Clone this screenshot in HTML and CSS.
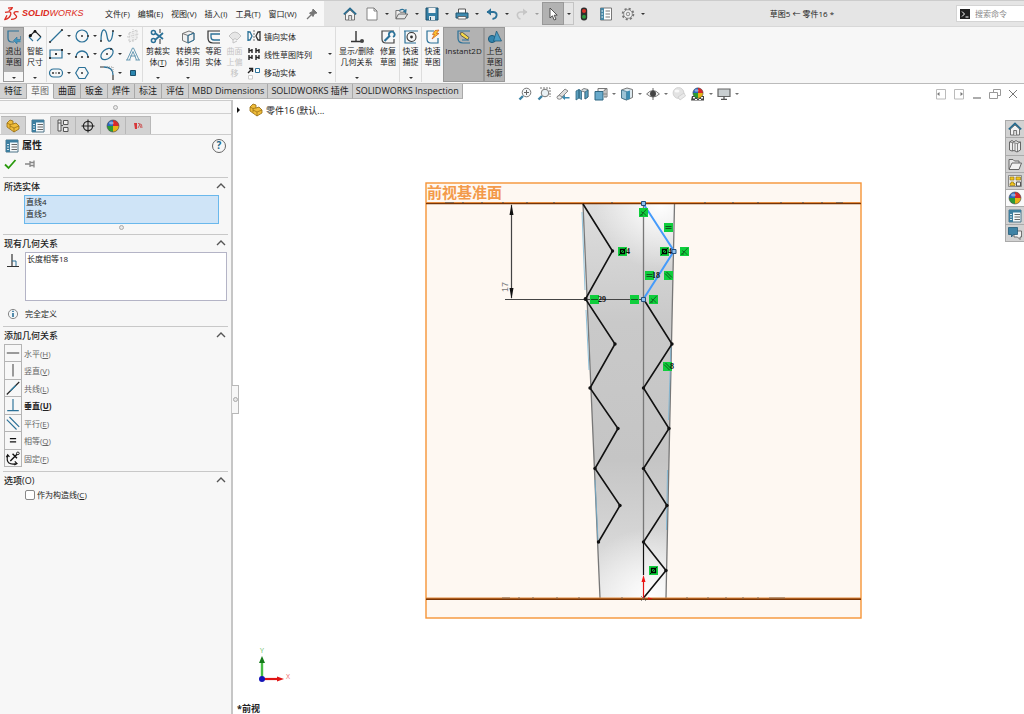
FILE: index.html
```
<!DOCTYPE html>
<html lang="zh">
<head>
    <meta charset="UTF-8">
    <meta name="viewport" content="width=device-width, initial-scale=1.0">
    <title>SOLIDWORKS</title>
    <link rel="stylesheet" href="styles.css">
</head>
<body>
    <!-- Shared icons -->
    <svg class="sprite" aria-hidden="true">
        <defs>
            <symbol id="i-ball" viewBox="0 0 14 14">
                <path d="M7 7V1A6 6 0 0 1 13 7Z" fill="#d8282c"/>
                <path d="M7 7H13A6 6 0 0 1 7 13Z" fill="#e7b417"/>
                <path d="M7 7V13A6 6 0 0 1 1 7Z" fill="#2c9b35"/>
                <path d="M7 7H1A6 6 0 0 1 7 1Z" fill="#2766c2"/>
                <circle cx="7" cy="7" r="6" fill="none" stroke="#444" stroke-width=".6"/>
                <ellipse cx="5.4" cy="4" rx="2.4" ry="1.5" fill="#fff" opacity=".45"/>
            </symbol>
            <symbol id="i-list" viewBox="0 0 14 14">
                <path d="M1 1H13V13H1Z" fill="#f4f8fa" stroke="#4f7488"/>
                <path d="M1 1H13V3.5H1ZM1 1H5V13H1Z" fill="#3d7e9f"/>
                <path d="M2.2 5.5h1.6M2.2 8h1.6M2.2 10.5h1.6" stroke="#fff" stroke-width="1.2"/>
                <path d="M6.5 5.5H12M6.5 8H12M6.5 10.5H12" stroke="#666"/>
            </symbol>
            <symbol id="i-home" viewBox="0 0 14 14">
                <path d="M2.5 7V13H11.5V7L7 3Z" fill="#f3f3f3" stroke="#555" stroke-width=".8"/>
                <path d="M5.7 13V8.5H8.6V13" fill="#ddd" stroke="#555" stroke-width=".8"/>
                <path d="M.8 7.4L7 1.4L13.2 7.4" fill="none" stroke="#23688c" stroke-width="1.6"/>
            </symbol>
            <symbol id="i-part" viewBox="0 0 14 14">
                <path d="M1 4L4 1L7 2V5L10 4L13 7V10L8 13L1 8Z" fill="#f0bd3b" stroke="#94690f" stroke-width=".8"/>
                <path d="M1 4L4 5.5V9.5M4 5.5L7 5M8 13V9L13 7M8 9L4 7" fill="none" stroke="#94690f" stroke-width=".7"/>
            </symbol>
            <symbol id="i-chevron" viewBox="0 0 10 6">
                <path d="M1 5L5 1L9 5" fill="none" stroke="#555" stroke-width="1.4"/>
            </symbol>
            <symbol id="b-coin" viewBox="0 0 9 9">
                <path d="M0 0H9V9H0Z" fill="#0fce3c"/>
                <path d="M1.5 7.8L7.5 1.2M4.2 4.6L7.3 7.8M2.2 3.6L4.2 5M1.2 7H4" fill="none" stroke="#12511f" stroke-width=".8"/>
            </symbol>
            <symbol id="b-equal" viewBox="0 0 9 9">
                <path d="M0 0H9V9H0Z" fill="#0fce3c"/>
                <path d="M1.5 3.5H7.5M1.5 5.5H7.5" stroke="#12511f"/>
            </symbol>
            <symbol id="b-horiz" viewBox="0 0 9 9">
                <path d="M0 0H9V9H0Z" fill="#0fce3c"/>
                <path d="M1 4.5H8" stroke="#12511f"/>
            </symbol>
            <symbol id="b-para" viewBox="0 0 9 9">
                <path d="M0 0H9V9H0Z" fill="#0fce3c"/>
                <path d="M1 2.5L6.5 8M2.5 1L8 6.5" stroke="#12511f"/>
            </symbol>
            <symbol id="b-mid" viewBox="0 0 9 9">
                <path d="M0 0H9V9H0Z" fill="#0fce3c"/>
                <path d="M2.5 2.5H6.5V6.5H2.5Z" fill="none" stroke="#000" stroke-width="1.3"/>
                <path d="M1 8L8 1" stroke="#000" stroke-width=".8"/>
            </symbol>
        </defs>
    </svg>

    <header class="titlebar">
        <div class="brand-area">
            <svg class="logo-mark" viewBox="0 0 16 16">
                <g fill="none" stroke="#dc2a20" stroke-width="1.3" stroke-linejoin="round">
                    <path d="M4 2.2L8.4 1.6Q8 3.4 4.8 4.6"/>
                    <path d="M1 6.4Q7.5 4.6 6.8 8.2Q5.6 12.4 .8 13.6L3 9.2"/>
                    <path d="M14.6 5.8Q9.8 5.2 10 7.4L12.6 10.4Q12.8 13.2 7 13.4"/>
                </g>
            </svg>
            <div class="logo"><b>SOLID</b>WORKS</div>
            <nav class="menu">
                <a href="#">文件(F)</a>
                <a href="#">编辑(E)</a>
                <a href="#">视图(V)</a>
                <a href="#">插入(I)</a>
                <a href="#">工具(T)</a>
                <a href="#">窗口(W)</a>
            </nav>
            <button class="icon-btn" aria-label="固定">
                <svg viewBox="0 0 14 14"><path d="M8 2L12 6L9.5 6.5L8 9.5L4.5 6L7.5 4.5Z" fill="#777" stroke="#777"/><path d="M6 8L2 12" stroke="#777" stroke-width="1.2"/></svg>
            </button>
        </div>
        <div class="quick">
            <button class="icon-btn" aria-label="主页"><svg viewBox="0 0 14 14"><use href="#i-home"/></svg></button>
            <button class="icon-btn spaced" aria-label="新建">
                <svg viewBox="0 0 14 14"><path d="M2 1H9L12 4V13H2Z" fill="#fff" stroke="#777" stroke-width=".9"/><path d="M9 1V4H12" fill="none" stroke="#777" stroke-width=".9"/></svg>
            </button>
            <button class="drop" aria-label="更多"></button>
            <button class="icon-btn" aria-label="打开">
                <svg viewBox="0 0 16 14"><path d="M1 12V3H5L6 5H12V7" fill="#eee" stroke="#666"/><path d="M1 12.5L4 7H14.5L11 12.5Z" fill="#e4e4e4" stroke="#555"/><path d="M5 3Q10 0 12 4.5M12.6 1.5L12.2 5L9.4 3.6" fill="none" stroke="#2a7196" stroke-width="1.4"/></svg>
            </button>
            <button class="drop" aria-label="更多"></button>
            <button class="icon-btn" aria-label="保存">
                <svg viewBox="0 0 14 14"><path d="M1 1H13V13H1Z" fill="#347fa5" stroke="#1d516d"/><path d="M3.5 1H10.5V6H3.5Z" fill="#f4f4f4"/><path d="M4 9H10V13H4Z" fill="#dfe8ec"/><path d="M5.5 10V13" stroke="#1d516d"/></svg>
            </button>
            <button class="drop" aria-label="更多"></button>
            <button class="icon-btn" aria-label="打印">
                <svg viewBox="0 0 14 14"><path d="M3.5 6V2H10.5V6" fill="#fff" stroke="#555"/><path d="M1 6H13V11H1Z" fill="#3f8bb0" stroke="#225770"/><path d="M3 9.5H11V12H3Z" fill="#fff" stroke="#555" stroke-width=".8"/></svg>
            </button>
            <button class="drop" aria-label="更多"></button>
            <button class="icon-btn" aria-label="撤消">
                <svg viewBox="0 0 14 14"><path d="M2 5H8.5Q12 5.5 11.6 8.5Q11.2 11.5 7.5 12" fill="none" stroke="#2b7198" stroke-width="1.8"/><path d="M6 1.2L1.6 5L6 8.6Z" fill="#2b7198"/></svg>
            </button>
            <button class="drop" aria-label="更多"></button>
            <button class="icon-btn" aria-label="重做" disabled>
                <svg viewBox="0 0 14 14"><path d="M12 5H5.5Q2 5.5 2.4 8.5Q2.8 11.5 5.5 12" fill="none" stroke="#c6c6c6" stroke-width="1.6"/><path d="M8 1.6L12.4 5L8 8.4Z" fill="#c6c6c6"/></svg>
            </button>
            <button class="drop" aria-label="更多"></button>
            <button class="select-btn" aria-label="选择">
                <svg viewBox="0 0 14 14"><path d="M4 1V11L6.4 8.8L8.2 13L10 12.2L8.2 8.2H11.2Z" fill="#fff" stroke="#444" stroke-width=".9"/></svg>
            </button>
            <button class="drop select-drop" aria-label="更多"></button>
            <button class="icon-btn" aria-label="重建模型">
                <svg viewBox="0 0 14 14"><rect x="3.8" y=".5" width="6.4" height="13" rx="3" fill="#2e2e2e"/><circle cx="7" cy="4" r="2" fill="#dd3328"/><circle cx="7" cy="9.8" r="2" fill="#2f9a3e"/></svg>
            </button>
            <button class="icon-btn spaced" aria-label="文件属性">
                <svg viewBox="0 0 14 14"><path d="M1.5 1H12.5V13H1.5Z" fill="#fff" stroke="#777"/><path d="M1.5 1H5V13H1.5Z" fill="#4687a6"/><path d="M6.5 4H11M6.5 7H11M6.5 10H11" stroke="#777"/><path d="M2.5 4h1.5M2.5 7h1.5M2.5 10h1.5" stroke="#fff"/></svg>
            </button>
            <button class="icon-btn spaced" aria-label="选项">
                <svg viewBox="0 0 14 14"><circle cx="7" cy="7" r="5.3" fill="none" stroke="#777" stroke-width="2" stroke-dasharray="2.1 2.06"/><circle cx="7" cy="7" r="4.3" fill="#f4f4f4" stroke="#777" stroke-width=".8"/><circle cx="7" cy="7" r="1.8" fill="#e5e5e5" stroke="#777" stroke-width=".8"/></svg>
            </button>
            <button class="drop" aria-label="更多"></button>
        </div>
        <div class="doc-title">草图5 ← 零件16 *</div>
        <label class="search">
            <svg viewBox="0 0 10 10"><path d="M0 0H10V10H0Z" fill="#222"/><path d="M2 2.5L4.5 5L2 7.5M5.5 8H8.5" fill="none" stroke="#fff"/></svg>
            <input type="text" placeholder="搜索命令" aria-label="搜索命令">
        </label>
    </header>

    <div class="ribbon">
        <button class="tool exit active">
            <svg viewBox="0 0 16 16"><path d="M13 2H2V9Q2 13 6 13H8" fill="none" stroke="#2b7198" stroke-width="1.2"/><path d="M14.5 7V10.5H11V8L7.5 11.5L11 15V12.8H14.5" fill="#4295bd" stroke="#2b7198" stroke-width=".6"/></svg>
            <span>退出草图</span><i class="caret"></i>
        </button>
        <button class="tool dim">
            <svg viewBox="0 0 16 16"><path d="M2 8L8 2L14 8" fill="none" stroke="#222" stroke-width="1.1"/><path d="M2 8L6 12M14 8L10 12" stroke="#2b7198" stroke-width="1.1"/><circle cx="3.4" cy="6.6" r="1.6" fill="#111"/><circle cx="8" cy="2.4" r="1.4" fill="#111"/></svg>
            <span>智能尺寸</span><i class="caret"></i>
        </button>
        <div class="sketch-grid">
            <button class="icon-btn" aria-label="直线"><svg viewBox="0 0 16 16"><path d="M2 14L14 2" stroke="#2b7198" stroke-width="1.2"/><circle cx="2" cy="14" r="1.1" fill="#333"/><circle cx="14" cy="2" r="1.1" fill="#333"/></svg></button>
            <button class="drop" aria-label="更多"></button>
            <button class="icon-btn" aria-label="圆"><svg viewBox="0 0 16 16"><circle cx="8" cy="8" r="6" fill="none" stroke="#2b7198" stroke-width="1.2"/><circle cx="8" cy="8" r="1" fill="#333"/><circle cx="14" cy="8" r="1" fill="#333"/></svg></button>
            <button class="drop" aria-label="更多"></button>
            <button class="icon-btn" aria-label="样条曲线"><svg viewBox="0 0 16 16"><path d="M2 13C2 -2 7 0 8 8S13 15 14 3" fill="none" stroke="#2b7198" stroke-width="1.3"/><circle cx="2" cy="13" r="1" fill="#333"/><circle cx="14" cy="3" r="1" fill="#333"/></svg></button>
            <button class="drop" aria-label="更多"></button>
            <button class="icon-btn" aria-label="基准面" disabled><svg viewBox="0 0 16 16"><path d="M4 5L12 2V11L4 14Z" fill="#eee" stroke="#c8c8c8" stroke-dasharray="2 1"/><path d="M8 1V15M2 9L14 6" stroke="#ccc" stroke-dasharray="1 1"/></svg></button>

            <button class="icon-btn" aria-label="矩形"><svg viewBox="0 0 16 16"><path d="M2 4H14V12H2Z" fill="none" stroke="#2b7198" stroke-width="1.2"/><path d="M7 7h2v2H7ZM13 3h2v2h-2ZM1 11h2v2H1Z" fill="#333"/></svg></button>
            <button class="drop" aria-label="更多"></button>
            <button class="icon-btn" aria-label="圆弧"><svg viewBox="0 0 16 16"><path d="M2 11A6 6 0 0 1 14 11" fill="none" stroke="#2b7198" stroke-width="1.3"/><circle cx="2" cy="11" r="1.1" fill="#333"/><circle cx="14" cy="11" r="1.1" fill="#333"/><circle cx="8" cy="11" r="1.1" fill="#333"/></svg></button>
            <button class="drop" aria-label="更多"></button>
            <button class="icon-btn" aria-label="椭圆"><svg viewBox="0 0 16 16"><ellipse cx="8" cy="8" rx="7" ry="4.6" transform="rotate(-40 8 8)" fill="none" stroke="#2b7198" stroke-width="1.2"/><circle cx="8" cy="8" r="1" fill="#333"/><circle cx="12" cy="3" r="1" fill="#333"/></svg></button>
            <button class="drop" aria-label="更多"></button>
            <button class="icon-btn" aria-label="文字"><svg viewBox="0 0 16 16"><path d="M2 14L7.5 2H8.5L14 14M4.5 14L8 5.5L11.5 14M5 10H11M1 14H5.5M10.5 14H15" fill="none" stroke="#6a9bb4"/></svg></button>

            <button class="icon-btn" aria-label="槽口"><svg viewBox="0 0 16 16"><rect x="1.5" y="4" width="13" height="8" rx="4" fill="none" stroke="#2b7198" stroke-width="1.2"/><path d="M4 8h2M7.5 8h1M10 8h2" stroke="#333" stroke-width="1.4"/></svg></button>
            <button class="drop" aria-label="更多"></button>
            <button class="icon-btn" aria-label="多边形"><svg viewBox="0 0 16 16"><path d="M5 2.5H11L14.3 8L11 13.5H5L1.7 8Z" fill="none" stroke="#2b7198" stroke-width="1.2"/><circle cx="8" cy="8" r="1" fill="#333"/></svg></button>
            <span></span>
            <button class="icon-btn" aria-label="圆角"><svg viewBox="0 0 16 16"><path d="M5 2Q14 2 14 10" fill="none" stroke="#2b7198" stroke-width="1.3"/><path d="M1 2H5M14 10V15" stroke="#333" stroke-width="1.2"/><path d="M8 2H14V8" fill="none" stroke="#999" stroke-dasharray="1 1"/></svg></button>
            <button class="drop" aria-label="更多"></button>
            <button class="icon-btn" aria-label="点"><svg viewBox="0 0 16 16"><path d="M5.5 5.5H10.5V10.5H5.5Z" fill="#2b86b0" stroke="#1d516d"/></svg></button>
        </div>
        <button class="tool wide">
            <svg viewBox="0 0 16 16"><path d="M5 4L13 10M5 11L13 4" stroke="#2b7198" stroke-width="1.8"/><circle cx="3.4" cy="3.4" r="2" fill="none" stroke="#2b7198" stroke-width="1.5"/><circle cx="3.4" cy="11.6" r="2" fill="none" stroke="#2b7198" stroke-width="1.5"/><path d="M10 0V4M10 10V15" stroke="#333"/></svg>
            <span>剪裁实体(<u>T</u>)</span><i class="caret"></i>
        </button>
        <button class="tool wide">
            <svg viewBox="0 0 16 16"><path d="M2.5 4.5L9 2L14 4V11L8 14L2.5 11.5Z" fill="#f1f1f1" stroke="#777"/><path d="M2.5 4.5L8 6.5V14M8 6.5L14 4" fill="none" stroke="#777"/><path d="M8 6.5L14 4V11L8 14Z" fill="none" stroke="#2b7198"/></svg>
            <span>转换实体引用</span><i class="caret"></i>
        </button>
        <button class="tool">
            <svg viewBox="0 0 16 16"><path d="M14 2H2V9Q2 14 7 14H14" fill="none" stroke="#333" stroke-width="1.2"/><path d="M14 5H5V8Q5 11 8 11H14" fill="none" stroke="#2b7198" stroke-width="1.3"/></svg>
            <span>等距实体</span>
        </button>
        <button class="tool" disabled>
            <svg viewBox="0 0 16 16"><path d="M2 7Q8 -1 14 7L10 11Q8 8 6 11Z" fill="#e6e6e6" stroke="#c4c4c4"/><path d="M6 11V14L10 12" fill="none" stroke="#c4c4c4"/></svg>
            <span>曲面上偏移</span>
        </button>
        <div class="tool-list">
            <button>
                <svg viewBox="0 0 16 14"><path d="M2 2V12M2 11H4L6 7L4 3H2" fill="none" stroke="#2b7198" stroke-width="1.3"/><path d="M14 2V12M14 11H12L10 7L12 3H14" fill="none" stroke="#333" stroke-width="1.3"/><path d="M8 1V13" stroke="#777" stroke-dasharray="2 1"/></svg>
                镜向实体
            </button>
            <button>
                <svg viewBox="0 0 16 14"><path d="M3 1V6M3 3.5H6M6 2V6M3 8V13M3 10.5H6M6 8V12M10 1V6M10 3.5H13M13 2V6M10 8V13M10 10.5H13M13 8V12" fill="none" stroke="#222" stroke-width="1.4"/></svg>
                线性草图阵列<i class="caret"></i>
            </button>
            <button>
                <svg viewBox="0 0 16 14"><path d="M2 7L6 3M3 2.5H6.5V6" fill="none" stroke="#222" stroke-width="1.4"/><path d="M9.5 2.5H13.5V6.5H9.5Z" fill="#fff" stroke="#2b7198"/><path d="M2.5 9.5H6.5V13H2.5Z" fill="#fff" stroke="#ccc"/></svg>
                移动实体<i class="caret"></i>
            </button>
        </div>
        <button class="tool relations">
            <svg viewBox="0 0 16 16"><path d="M7 2V12M2 12.5H12" stroke="#333" stroke-width="1.4"/><circle cx="13" cy="12" r="2" fill="#444"/></svg>
            <span>显示/删除几何关系</span><i class="caret"></i>
        </button>
        <button class="tool repair">
            <svg viewBox="0 0 16 16"><path d="M14 2H2V10Q2 14 6 14H14V10" fill="none" stroke="#444" stroke-width="1.2"/><path d="M4.5 12L10 6.5" stroke="#2b7198" stroke-width="2.2"/><path d="M9.2 6.6A2.8 2.8 0 1 1 13 8" fill="none" stroke="#2b7198" stroke-width="1.8"/></svg>
            <span>修复草图</span>
        </button>
        <button class="tool edge">
            <svg viewBox="0 0 16 16"><path d="M1 2H15M2 2V14H13" fill="none" stroke="#2b7198" stroke-width="1.2"/><circle cx="8.5" cy="8" r="4.5" fill="none" stroke="#333" stroke-width="1.1"/><circle cx="8.5" cy="8" r="1.4" fill="#333"/></svg>
            <span>快速捕捉</span><i class="caret"></i>
        </button>
        <button class="tool edge">
            <svg viewBox="0 0 16 16"><path d="M9 2H2V10Q2 14 6 14H13V9" fill="none" stroke="#2b7198" stroke-width="1.2"/><path d="M10 1.5L14 1L11.5 4.5H14L7 10L9.5 5.5H7.5Z" fill="#fbc02d" stroke="#c8571b" stroke-width=".7"/></svg>
            <span>快速草图</span>
        </button>
        <button class="tool instant active">
            <svg viewBox="0 0 16 16"><path d="M14 2H2V9Q2 14 7 14H14" fill="none" stroke="#2b7198" stroke-width="1.2"/><path d="M4 4L6.5 3.5L13 8.5L11.5 10.8L5 6.5Z" fill="#f4d848" stroke="#444" stroke-width=".8"/><path d="M6 11H13" stroke="#2b7198"/></svg>
            <span>Instant2D</span>
        </button>
        <button class="tool active">
            <svg viewBox="0 0 16 16"><circle cx="5" cy="10" r="3.6" fill="#3484ac" stroke="#1f5c7c"/><path d="M9.5 2L14.5 12H6.5Z" fill="#4b9cc4" stroke="#1f5c7c" stroke-width=".8"/></svg>
            <span>上色草图轮廓</span>
        </button>
    </div>

    <div class="doc-bar">
        <nav class="tabs">
            <a href="#">特征</a>
            <a href="#" class="current">草图</a>
            <a href="#">曲面</a>
            <a href="#">钣金</a>
            <a href="#">焊件</a>
            <a href="#">标注</a>
            <a href="#">评估</a>
            <a href="#" class="addin">MBD Dimensions</a>
            <a href="#" class="addin">SOLIDWORKS 插件</a>
            <a href="#" class="addin">SOLIDWORKS Inspection</a>
        </nav>
        <div class="hud">
            <button class="icon-btn" aria-label="整屏显示全图"><svg viewBox="0 0 14 14"><circle cx="8.5" cy="5.5" r="4.3" fill="#f5f8fa" stroke="#777"/><path d="M8.5 3V8M6 5.5H11" stroke="#666"/><path d="M5 9L1.5 12.5" stroke="#3a82a5" stroke-width="2.4"/></svg></button>
            <button class="icon-btn" aria-label="局部放大"><svg viewBox="0 0 14 14"><path d="M3 1H13V10" fill="none" stroke="#777" stroke-dasharray="2 1"/><circle cx="8" cy="6" r="3.8" fill="#e9f1f5" stroke="#777"/><path d="M5 9L1.5 12.5" stroke="#3a82a5" stroke-width="2.4"/></svg></button>
            <button class="icon-btn" aria-label="上一视图"><svg viewBox="0 0 14 14"><path d="M1 10L9 2L12 4L5 11Z" fill="#ddd" stroke="#888"/><ellipse cx="3.4" cy="10.4" rx="2.4" ry="1.8" fill="#eee" stroke="#888"/><path d="M13.5 10H9V7.8L5.8 10.5L9 13V11.5H13.5Z" fill="#3a88ae"/></svg></button>
            <button class="icon-btn" aria-label="剖面视图"><svg viewBox="0 0 14 14"><path d="M1 4L4 2.5V11L1 13Z M4 2.5L6.5 4V12.5L4 11Z" fill="#5d9fbf" stroke="#2f6782" stroke-width=".8"/><path d="M6.5 3L9 1.5L13 2.5V10L10 12V5L6.5 4" fill="#d4dde1" stroke="#666" stroke-width=".8"/><path d="M10 5L13 3V10L10 12Z" fill="#5d9fbf" stroke="#2f6782" stroke-width=".8"/></svg></button>
            <button class="icon-btn" aria-label="视图定向"><svg viewBox="0 0 14 14"><path d="M4 4V1.5H13V10H10" fill="#f4f4f4" stroke="#777"/><path d="M1 4.5H9V13H1Z" fill="#69aacb" stroke="#2f6782"/><path d="M9 4.5L13 1.5M11 1.5V10M9 7H13" stroke="#777" stroke-width=".8"/></svg></button>
            <button class="drop" aria-label="更多"></button>
            <button class="icon-btn" aria-label="显示样式"><svg viewBox="0 0 14 14"><path d="M1.5 3L7 1L12.5 2.5V10.5L6.5 13L1.5 11Z" fill="#dce8ee" stroke="#777"/><path d="M1.5 3L6.5 4.5V13L1.5 11Z" fill="#9dc4d6" stroke="#2f6782" stroke-width=".7"/><path d="M6.5 4.5L10 3.5V12L6.5 13Z" fill="#3e8db2"/></svg></button>
            <button class="drop" aria-label="更多"></button>
            <button class="icon-btn" aria-label="隐藏/显示项目"><svg viewBox="0 0 14 14"><path d="M.6 7Q7 0 13.4 7Q7 13 .6 7Z" fill="#eee" stroke="#777"/><circle cx="7" cy="6.8" r="3" fill="#444"/><path d="M7 1V13" stroke="#444" stroke-width=".8"/></svg></button>
            <button class="drop" aria-label="更多"></button>
            <button class="icon-btn" aria-label="编辑外观" disabled><svg viewBox="0 0 14 14"><circle cx="6.5" cy="6" r="5.4" fill="#e3e3e3" stroke="#d2d2d2"/><ellipse cx="5" cy="4" rx="2.5" ry="1.6" fill="#f8f8f8"/><path d="M8 13L6 10L12 6L13.5 9Z" fill="#eaeaea" stroke="#ccc" stroke-width=".8"/></svg></button>
            <button class="icon-btn" aria-label="应用布景"><svg viewBox="0 0 14 14"><path d="M1 9H13V13.5H0Z" fill="#444"/><path d="M2 10h2v1.5H2ZM6 10h2v1.5H6ZM10 10h2v1.5h-2ZM4 12h2v1H4ZM8 12h2v1H8Z" fill="#fff"/><use href="#i-ball" x="1" y="0" width="12" height="12"/></svg></button>
            <button class="drop" aria-label="更多"></button>
            <button class="icon-btn" aria-label="视图设定"><svg viewBox="0 0 14 14"><path d="M1 2H13V9.5H1Z" fill="#c9ced0" stroke="#666" stroke-width="1.2"/><path d="M7 9.5V12M4 12.3H10" stroke="#555" stroke-width="1.3"/></svg></button>
            <button class="drop" aria-label="更多"></button>
        </div>
        <div class="window-btns">
            <button class="icon-btn" aria-label="左侧窗格"><svg viewBox="0 0 12 12"><path d="M1.5 1.5H10.5V11H1.5Z" fill="none" stroke="#bbb"/><path d="M2 6L4.5 4V8Z" fill="#777"/></svg></button>
            <button class="icon-btn" aria-label="右侧窗格"><svg viewBox="0 0 12 12"><path d="M1.5 1.5H10.5V11H1.5Z" fill="none" stroke="#bbb"/><path d="M10 6L7.5 4V8Z" fill="#777"/></svg></button>
            <button class="icon-btn" aria-label="最小化"><svg viewBox="0 0 12 12"><path d="M2 10H10" stroke="#888" stroke-width="1.4"/></svg></button>
            <button class="icon-btn" aria-label="还原"><svg viewBox="0 0 12 12"><path d="M4.5 4.5V1.5H11.5V7.5H8.5M.5 4.5H8.5V10.5H.5Z" fill="none" stroke="#999"/></svg></button>
            <button class="icon-btn" aria-label="关闭"><svg viewBox="0 0 12 12"><path d="M2 2L10 10M10 2L2 10" stroke="#777"/></svg></button>
        </div>
    </div>

    <main class="workspace">
        <aside class="panel">
            <div class="grip"><i class="dot"></i></div>
            <div class="panel-tabs">
                <button aria-label="特征管理器"><svg viewBox="0 0 14 14"><use href="#i-part"/></svg></button>
                <button class="current" aria-label="属性管理器"><svg viewBox="0 0 14 14"><use href="#i-list"/></svg></button>
                <button aria-label="配置管理器"><svg viewBox="0 0 14 14"><path d="M2 1H5V12H2ZM2 4H5M5 6.5H7" fill="#eee" stroke="#555"/><path d="M7.5 1.5H12V5.5H7.5ZM7.5 8.5H12V12.5H7.5Z" fill="#eee" stroke="#555"/></svg></button>
                <button aria-label="尺寸专家"><svg viewBox="0 0 14 14"><circle cx="7" cy="7" r="4.6" fill="none" stroke="#222" stroke-width="1.2"/><path d="M7 .5V13.5M.5 7H13.5" stroke="#222" stroke-width="1.1"/></svg></button>
                <button aria-label="外观管理器"><svg viewBox="0 0 14 14"><use href="#i-ball"/></svg></button>
                <button aria-label="MBD"><svg viewBox="0 0 14 14"><path d="M3 4H6V10H4Z" fill="#d8383a"/><path d="M7 5L8 4L10 9M7 9L9 5Q11 4 11 9" fill="none" stroke="#c55" stroke-width=".9"/></svg></button>
            </div>
            <div class="panel-title">
                <svg viewBox="0 0 14 14"><use href="#i-list"/></svg>
                <h1>属性</h1>
                <button class="help">?</button>
            </div>
            <div class="confirm">
                <button aria-label="确定"><svg viewBox="0 0 14 14"><path d="M2 7.5L5.5 11L12.5 3" fill="none" stroke="#2a9a0d" stroke-width="1.8"/></svg></button>
                <button aria-label="保持可见"><svg viewBox="0 0 14 14"><path d="M2 7H7M7 4V10M7 5.5H11M7 8.5H11M11 3.5V10.5" fill="none" stroke="#888" stroke-width="1.3"/></svg></button>
            </div>

            <section>
                <h2><label for="entities">所选实体</label><svg viewBox="0 0 10 6"><use href="#i-chevron"/></svg></h2>
                <select id="entities" class="entities" multiple>
                    <option>直线4</option>
                    <option>直线5</option>
                </select>
                <div class="resize"><i class="dot"></i></div>
            </section>

            <section>
                <h2><label for="relations">现有几何关系</label><svg viewBox="0 0 10 6"><use href="#i-chevron"/></svg></h2>
                <div class="existing">
                    <svg viewBox="0 0 14 16"><path d="M6 2V14M1 14.5H13" stroke="#333" stroke-width="1.2"/><path d="M6 9H10V14" fill="none" stroke="#2b7198"/></svg>
                    <select id="relations" multiple>
                        <option>长度相等18</option>
                    </select>
                </div>
                <div class="status">
                    <svg viewBox="0 0 12 12"><circle cx="6" cy="6" r="4.6" fill="#f2f6f8" stroke="#888"/><path d="M6 5V9M6 2.8V4" stroke="#2b7198" stroke-width="1.6"/></svg>
                    完全定义
                </div>
            </section>

            <section>
                <h2>添加几何关系<svg viewBox="0 0 10 6"><use href="#i-chevron"/></svg></h2>
                <div class="relations-list">
                    <button><svg viewBox="0 0 18 18"><path d="M2 9H16" stroke="#555" stroke-width="1.3"/></svg><span>水平(<u>H</u>)</span></button>
                    <button><svg viewBox="0 0 18 18"><path d="M9 2V16" stroke="#555" stroke-width="1.3"/></svg><span>竖直(<u>V</u>)</span></button>
                    <button><svg viewBox="0 0 18 18"><path d="M2 16L16 2" stroke="#222" stroke-width="1.3"/><path d="M6 12L12 6" stroke="#2b86b0" stroke-width="1.3"/></svg><span>共线(<u>L</u>)</span></button>
                    <button class="suggested"><svg viewBox="0 0 18 18"><path d="M9 2V15M2.5 15H15.5" stroke="#2b7198" stroke-width="1.3"/></svg><span>垂直(<u>U</u>)</span></button>
                    <button><svg viewBox="0 0 18 18"><path d="M2 5L13 16M5 2L16 13" stroke="#2b7198" stroke-width="1.3"/></svg><span>平行(<u>E</u>)</span></button>
                    <button><svg viewBox="0 0 18 18"><path d="M5.5 7.2H12.5M5.5 10.8H12.5" stroke="#111" stroke-width="1.6"/></svg><span>相等(<u>Q</u>)</span></button>
                    <button><svg viewBox="0 0 18 18"><circle cx="14.5" cy="3.5" r="1.5" fill="none" stroke="#111"/><path d="M13.5 4.5L6 12M8.5 4L13.5 9" fill="none" stroke="#111" stroke-width="1.6"/><path d="M3 5.500Q1.500 11 4 14Q7.500 16.500 13 15M1.500 8L3 5L5 7.500M11 12.500L13.500 15L10.500 16.500" fill="none" stroke="#111" stroke-width="1.3"/></svg><span>固定(<u>F</u>)</span></button>
                </div>
            </section>

            <section>
                <h2>选项(O)<svg viewBox="0 0 10 6"><use href="#i-chevron"/></svg></h2>
                <label class="check"><input type="checkbox"><span>作为构造线(<u>C</u>)</span></label>
            </section>
            <div class="splitter"><i class="dot"></i></div>
        </aside>

        <div class="viewport">
            <svg class="model" viewBox="233 100 791 614">
                <defs>
                    <linearGradient id="body" x1="0" y1="0" x2="0" y2="1">
                        <stop offset="0" stop-color="#dedede"/>
                        <stop offset=".3" stop-color="#c9c9c9"/>
                        <stop offset=".65" stop-color="#c5c5c5"/>
                        <stop offset=".9" stop-color="#dadada"/>
                        <stop offset="1" stop-color="#e4e4e4"/>
                    </linearGradient>
                    <radialGradient id="shine-top" gradientUnits="userSpaceOnUse" cx="660" cy="204" r="65">
                        <stop offset="0" stop-color="#fff"/>
                        <stop offset="1" stop-color="#fff" stop-opacity="0"/>
                    </radialGradient>
                    <radialGradient id="shine-bottom" gradientUnits="userSpaceOnUse" cx="650" cy="598" r="70">
                        <stop offset="0" stop-color="#fff"/>
                        <stop offset="1" stop-color="#fff" stop-opacity="0"/>
                    </radialGradient>
                </defs>

                <!-- Reference plane -->
                <rect x="426" y="183" width="435" height="435" fill="#fef8f2" stroke="#f69437" stroke-width="1.4"/>
                <text x="427" y="198" class="plane-name">前视基准面</text>

                <!-- Solid body -->
                <path d="M583 204H674.5L666 598H600Z" fill="url(#body)"/>
                <path d="M583 204H674.5L666 598H600Z" fill="url(#shine-top)"/>
                <path d="M583 204H674.5L666 598H600Z" fill="url(#shine-bottom)"/>
                <path d="M583 204L600 598M674.5 204L666 598" stroke="#777" stroke-width="1.3"/>
                <path d="M582 212L585 290M586 310L589 370M595 480L598 540M671 345L668.5 420M667.5 470L666.5 530" stroke="#74b4d6" stroke-width=".8"/>
                <path d="M643.5 204V542" stroke="#777" stroke-width="1.3"/>
                <path d="M643.5 542V575" stroke="#111" stroke-width="1.2"/>

                <path d="M426 203H861M426 598.6H861" stroke="#e28a3d" stroke-width="2"/>
                <path d="M426 203.6H861M426 599.3H861" stroke="#7a3505" stroke-width="1.4"/>
                <path d="M445 202.5H454M462 202.5h2M481 202.5h2M502 202.5h2M526 202.5h2M553 202.5h2M611 202.5h2M704 202.5h2M732 202.5h2M757 202.5h2M780 202.5h2M802 202.5h2M821 202.5h2M836 202.5H843M502 598H510M518 598h2M532 598h2M556 598h2M578 598h2M621 598h2M686 598h2M707 598h2M725 598h2M742 598h2M757 598h2M769 598H785" stroke="#8a6a4e"/>

                <!-- Dimension -->
                <path d="M511.5 205V298M505 299.5H643" stroke="#444" stroke-width="1.2"/>
                <path d="M511.5 204L513.5 215H509.5ZM511.5 299L513.5 288H509.5Z" fill="#111"/>
                <text transform="translate(508 292) rotate(-90)" class="dim-text">17</text>

                <!-- Sketch profiles -->
                <g class="sketch-lines">
                    <path d="M583 204L612.5 251L585.5 299L615 344L590 388L618 428.5L595 468.5L620 505.5L598.5 542"/>
                    <path d="M643.5 299L672 344L643.5 388L669 428.5L643.5 468.5L667 505.5L643.5 542L666 570.5L643.5 598"/>
                </g>
                <g fill="#111">
                    <circle cx="612.5" cy="251" r="1.7"/><circle cx="585.5" cy="299" r="1.9"/><circle cx="615" cy="344" r="1.7"/>
                    <circle cx="590" cy="388" r="1.7"/><circle cx="618" cy="428.5" r="1.7"/><circle cx="595" cy="468.5" r="1.7"/>
                    <circle cx="620" cy="505.5" r="1.7"/><circle cx="598.5" cy="542" r="1.7"/><circle cx="672" cy="344" r="1.7"/>
                    <circle cx="643.5" cy="388" r="1.7"/><circle cx="669" cy="428.5" r="1.7"/><circle cx="643.5" cy="468.5" r="1.7"/>
                    <circle cx="667" cy="505.5" r="1.7"/><circle cx="643.5" cy="542" r="1.7"/><circle cx="666" cy="570.5" r="1.7"/>
                </g>
                <path d="M643.5 204L674 251L643.5 299" fill="none" stroke="#459bfb" stroke-width="2"/>
                <g fill="#8fc1f0" stroke="#24507c">
                    <path d="M641.5 201.5h4v4h-4Z"/><path d="M672 249.5h4v4h-4Z"/><path d="M641.5 297.5h4v4h-4Z"/>
                </g>

                <!-- Relation badges -->
                <use href="#b-coin" x="639" y="208" width="9" height="9"/>
                <use href="#b-equal" x="664" y="223" width="9" height="9"/>
                <use href="#b-mid" x="618" y="247" width="9" height="9"/>
                <use href="#b-mid" x="660" y="247" width="9" height="9"/>
                <use href="#b-coin" x="680" y="247" width="9" height="9"/>
                <use href="#b-equal" x="645" y="271" width="9" height="9"/>
                <use href="#b-para" x="664" y="271" width="9" height="9"/>
                <use href="#b-horiz" x="590" y="295" width="9" height="9"/>
                <use href="#b-horiz" x="630" y="295" width="9" height="9"/>
                <use href="#b-coin" x="649" y="295" width="9" height="9"/>
                <use href="#b-para" x="663" y="362" width="9" height="9"/>
                <use href="#b-mid" x="649" y="566" width="9" height="9"/>
                <g class="badge-text">
                    <text x="626" y="254">4</text>
                    <text x="668" y="254">4</text>
                    <text x="652" y="278">18</text>
                    <text x="598" y="302">29</text>
                    <text x="670" y="369">8</text>
                </g>

                <!-- Origin -->
                <path d="M643.5 598V580" stroke="#e01414" stroke-width="1.2"/>
                <path d="M643.5 575L645.5 582H641.5ZM648 597.5L653 598.5L648 599.5Z" fill="#f01414"/>
                <path d="M641 596L646 601M646 596L641 601" stroke="#666" stroke-width=".7"/>
            </svg>

            <div class="tree-root">
                <i class="expand"></i>
                <svg viewBox="0 0 14 14"><use href="#i-part"/></svg>
                零件16 (默认...
            </div>

            <svg class="triad" viewBox="0 0 40 40">
                <path d="M10 33V14" stroke="#45bd45" stroke-width="2.4"/>
                <path d="M10 10L13 17H7Z" fill="#157a1b"/>
                <path d="M10 33H27" stroke="#e01414" stroke-width="2.2"/>
                <path d="M32 33L25 30.5V35.5Z" fill="#e01414"/>
                <circle cx="10" cy="33" r="3" fill="#1515b8"/>
                <text x="8" y="7" fill="#5dbb5d">Y</text>
                <text x="34" y="33" fill="#f06a6a">X</text>
            </svg>
            <div class="view-name">*前视</div>

            <div class="task-pane">
                <button aria-label="资源"><svg viewBox="0 0 14 14"><use href="#i-home"/></svg></button>
                <button aria-label="设计库"><svg viewBox="0 0 14 14"><path d="M1.5 3L4 1.5L6 3L8 1.5L10 3L12.5 3V11L9 13L6 11.5L4 12L1.5 11Z" fill="#eee" stroke="#666"/><path d="M4.5 4V12M7 4.5V12M9.5 4.5V13M1.5 3L9.5 4.5L12.5 3" fill="none" stroke="#666" stroke-width=".8"/></svg></button>
                <button aria-label="文件探索器"><svg viewBox="0 0 14 14"><path d="M1 12V2.5H5L6.5 4H11V6" fill="#e8e8e8" stroke="#666"/><path d="M1 12.5L4 6H13.5L11 12.5Z" fill="#f2f2f2" stroke="#666"/></svg></button>
                <button aria-label="视图调色板"><svg viewBox="0 0 14 14"><path d="M.5 1.5H13.5V12.5H.5Z" fill="#e6e6e6" stroke="#777" stroke-width=".8"/><path d="M2 3H6V6H2ZM8 3H12.5V6H8ZM2 11.5V9.5H3V8H5.5V9.5H7V11.5Z" fill="#f2c51d" stroke="#8a6d0c" stroke-width=".6"/><path d="M8.5 8H12.5V12H8.5Z" fill="#f4f4f4" stroke="#555"/></svg></button>
                <button class="current" aria-label="外观"><svg viewBox="0 0 14 14"><use href="#i-ball"/></svg></button>
                <button aria-label="自定义属性"><svg viewBox="0 0 14 14"><use href="#i-list"/></svg></button>
                <button aria-label="论坛"><svg viewBox="0 0 14 14"><path d="M6 5H13.5V11H12V13.5L9.5 11H6Z" fill="#f2f2f2" stroke="#555" stroke-width=".8"/><path d="M.5 1.5H9.5V8.5H5.5L3.5 11V8.5H.5Z" fill="#3f83a5" stroke="#245b77" stroke-width=".8"/></svg></button>
            </div>
        </div>
    </main>
</body>
</html>
```
FILE: styles.css
```
* {
    box-sizing: border-box;
}

body {
    display: flex;
    flex-direction: column;
    height: 100vh;
    margin: 0;
    overflow: hidden;
    background-color: #fff;
    color: #222;
    font-family: "Open Sans", "Noto Sans CJK SC", sans-serif;
    font-size: 8px;
    line-height: 11px;
}

button {
    margin: 0;
    padding: 0;
    border: 0;
    background: none;
    color: inherit;
    font: inherit;
}

a {
    color: inherit;
    text-decoration: none;
}

svg {
    display: block;
    flex: none;
}

.sprite {
    position: absolute;
    width: 0;
    height: 0;
}

.icon-btn svg {
    width: 14px;
    height: 14px;
}

.caret,
.drop::after {
    width: 0;
    height: 0;
    border: 2px solid transparent;
    border-top-color: #333;
    border-bottom: 0;
}

.drop {
    display: flex;
    align-items: center;
    justify-content: center;
}

.drop::after {
    content: "";
}

.dot {
    width: 5px;
    height: 5px;
    border: 1px solid #aaa;
    border-radius: 50%;
    background-color: #e8e8e8;
}

/* Title bar */
.titlebar {
    display: flex;
    align-items: center;
    flex: none;
    height: 27px;
    border-top: 1px solid #ccc;
    border-bottom: 1px solid #d8d8d8;
    background-color: #e5e5e5;
}

.brand-area {
    display: flex;
    align-items: center;
    width: 324px;
    height: 100%;
    padding-left: 4px;
    background-color: #f8f8f8;
}

.logo-mark {
    width: 16px;
    height: 16px;
}

.logo {
    width: 81px;
    padding-left: 2px;
    color: #dc2a20;
    font-family: "Liberation Sans", sans-serif;
    font-size: 9px;
    font-style: italic;
}

.menu {
    display: flex;
    gap: 8px;
    margin-left: 4px;
    white-space: nowrap;
}

.brand-area .icon-btn {
    margin-left: 8px;
}

.quick {
    display: flex;
    align-items: center;
    height: 100%;
    margin-left: 16px;
}

.quick .icon-btn {
    width: 20px;
    padding: 0 3px;
}

.quick .spaced {
    margin-left: 2px;
}

.quick .drop {
    width: 10px;
    height: 100%;
}

.quick .icon-btn:disabled + .drop {
    opacity: 0.4;
}

.select-btn {
    height: 23px;
    padding: 0 3px;
    border: 1px solid #999;
    background-color: #b2b2b2;
}

.select-btn svg {
    width: 14px;
    height: 14px;
}

.quick .select-drop {
    height: 23px;
    border: 1px solid #c4c4c4;
    border-left: 0;
}

.doc-title {
    margin: 0 auto;
}

.search {
    display: flex;
    align-items: center;
    width: 68px;
    height: 17px;
    padding-left: 3px;
    background-color: #fff;
    border: 1px solid #d4d4d4;
    border-right: 0;
}

.search svg {
    width: 10px;
    height: 10px;
}

.search input {
    min-width: 0;
    flex: 1;
    padding: 0 0 0 5px;
    border: 0;
    background: none;
    font: inherit;
}

.search input::placeholder {
    color: #888;
}

/* Ribbon */
.ribbon {
    display: flex;
    flex: none;
    height: 57px;
    padding-left: 3px;
    border-bottom: 1px solid #bbb;
    background-color: #f7f7f7;
}

.tool {
    display: flex;
    flex-direction: column;
    align-items: center;
    width: 21px;
    height: 55px;
    padding: 2px 0 3px;
}

.tool svg {
    width: 16px;
    height: 16px;
}

.tool span {
    width: 100%;
    padding: 0 2px;
    text-align: center;
    word-break: break-all;
}

.tool u,
.relations-list u,
.check u {
    text-underline-offset: 1px;
}

.tool .caret {
    margin-top: auto;
}

.tool:disabled {
    color: #c4c4c4;
}

.tool.active {
    padding: 1px 0 2px;
    border: 1px solid #999;
    background-color: #b2b2b2;
}

.tool.active span {
    padding: 0 1px;
}

.tool.exit {
    background-image: linear-gradient(#b2b2b2 44px, #f7f7f7 44px);
}

.tool.dim,
.tool.repair {
    width: 22px;
}

.tool.wide {
    width: 30px;
}

.tool.instant {
    width: 41px;
}

.tool.instant span {
    white-space: nowrap;
}

.tool.relations {
    width: 42px;
    border-left: 1px solid #ddd;
}

.tool.edge {
    width: 22px;
    border-left: 1px solid #ddd;
}

.sketch-grid {
    display: grid;
    grid-template-columns: 16px 10px 16px 9px 16px 10px 16px;
    grid-template-rows: repeat(3, 1fr);
    align-items: center;
    height: 55px;
    padding: 0 1px;
    border-left: 1px solid #ddd;
    border-right: 1px solid #ddd;
}

.sketch-grid .icon-btn svg {
    width: 16px;
    height: 16px;
}

.tool-list {
    display: flex;
    flex-direction: column;
    width: 90px;
    height: 55px;
    padding-left: 1px;
}

.tool-list button {
    display: flex;
    align-items: center;
    flex: 1;
    gap: 2px;
    white-space: nowrap;
}

.tool-list svg {
    width: 16px;
    height: 14px;
}

.tool-list .caret {
    margin-left: auto;
    margin-right: 3px;
}

/* Command tabs and view toolbar */
.doc-bar {
    position: relative;
    z-index: 1;
    display: flex;
    flex: none;
    height: 16px;
}

.tabs {
    display: flex;
    height: 15px;
    font-size: 9px;
    line-height: 14px;
    white-space: nowrap;
}

.tabs a {
    padding: 0 4px;
    border-right: 1px solid #a8a8a8;
    border-bottom: 1px solid #b4b4b4;
    background-color: #d2d2d2;
}

.tabs a.addin {
    padding: 0 3px;
}

.tabs a.current {
    border-bottom-color: #f7f7f7;
    background-color: #f7f7f7;
    color: #666;
}

.hud {
    display: flex;
    align-items: center;
    height: 20px;
    margin-left: 53px;
}

.hud .icon-btn {
    width: 19px;
    padding: 0 2px;
}

.hud .drop {
    width: 7px;
    height: 14px;
    opacity: 0.7;
}

.window-btns {
    display: flex;
    align-items: center;
    gap: 6px;
    height: 20px;
    margin-left: auto;
    margin-right: 5px;
}

.window-btns .icon-btn svg {
    width: 12px;
    height: 12px;
}

/* Property panel */
.workspace {
    display: flex;
    flex: 1;
    min-height: 0;
}

.panel {
    position: relative;
    flex: none;
    width: 233px;
    border-right: 2px solid #c6c6c6;
    background-color: #f7f7f7;
}

.grip {
    display: flex;
    align-items: center;
    justify-content: center;
    height: 14px;
    border-top: 1px solid #ccc;
    border-bottom: 1px solid #d0d0d0;
}

.panel-tabs {
    display: flex;
    height: 21px;
    padding: 2px 0 0 1px;
    border-bottom: 1px solid #ccc;
}

.panel-tabs button {
    display: flex;
    align-items: center;
    justify-content: center;
    width: 25px;
    border: 1px solid #b8b8b8;
    border-left-width: 0;
    border-bottom: 0;
    background-color: #d2d2d2;
}

.panel-tabs .current {
    border-top-color: #f7f7f7;
    background-color: #f7f7f7;
}

.panel-tabs svg,
.panel-title svg,
.confirm svg {
    width: 14px;
    height: 14px;
}

.panel-title {
    display: flex;
    align-items: center;
    gap: 3px;
    height: 21px;
    padding: 0 5px;
}

.panel-title h1 {
    margin: 0;
    font-size: 10px;
}

.help {
    width: 14px;
    height: 14px;
    margin-left: auto;
    border: 1px solid #666;
    border-radius: 50%;
    color: #23688c;
    font-size: 10px;
    font-weight: bold;
}

.confirm {
    display: flex;
    align-items: flex-start;
    gap: 6px;
    height: 21px;
    padding: 1px 3px;
}

section {
    margin: 0 3px;
    border-top: 1px solid #c8c8c8;
}

section h2 {
    display: flex;
    align-items: center;
    justify-content: space-between;
    height: 17px;
    margin: 0;
    padding: 0 2px 1px 1px;
    font-size: 9px;
    font-weight: 500;
}

section h2 svg {
    width: 10px;
    height: 6px;
}

select {
    display: block;
    margin: 0;
    padding: 0;
    border: 1px solid #b4b4c6;
    border-radius: 0;
    background-color: #fff;
    color: inherit;
    font: inherit;
    overflow: hidden;
    outline: 0;
}

option {
    min-height: 12px;
    padding: 0 1px;
    font-size: 8px;
    line-height: 12px;
}

.entities {
    width: 195px;
    height: 29px;
    margin-left: 21px;
    border-color: #6ab8ec;
    background-color: #cfe4f7;
}

.resize {
    display: flex;
    justify-content: center;
    align-items: center;
    height: 7px;
    margin: 0 5px 3px 17px;
}

.existing {
    display: flex;
    gap: 5px;
    height: 49px;
    padding-left: 3px;
}

.existing svg {
    width: 14px;
    height: 16px;
}

.existing select {
    flex: 1;
    height: 49px;
    margin-right: 1px;
}

.status {
    display: flex;
    align-items: center;
    gap: 6px;
    height: 25px;
    padding-left: 4px;
}

.status svg {
    width: 12px;
    height: 12px;
}

.relations-list {
    display: grid;
    grid-auto-rows: 1fr;
    height: 123px;
    margin: 0 1px 4px;
}

.relations-list button {
    display: flex;
    align-items: center;
    gap: 2px;
    color: #666;
    text-align: left;
}

.relations-list svg {
    width: 18px;
    height: 100%;
    border: 1px solid #b4b4b4;
    border-top-width: 0;
}

.relations-list button:first-child svg {
    border-top-width: 1px;
}

.relations-list .suggested {
    color: #222;
    font-weight: bold;
}

.check {
    display: flex;
    align-items: center;
    gap: 2px;
    padding-left: 22px;
}

.check input {
    width: 10px;
    height: 10px;
    margin: 0;
    appearance: none;
    border: 1px solid #888;
    border-radius: 2px;
    background-color: #fff;
}

.splitter {
    position: absolute;
    top: 285px;
    right: -8px;
    z-index: 1;
    display: flex;
    align-items: center;
    justify-content: center;
    width: 7px;
    height: 29px;
    border: 1px solid #b8b8b8;
    border-left: 0;
    background-color: #f7f7f7;
}

/* Graphics area */
.viewport {
    position: relative;
    flex: 1;
    min-width: 0;
}

.model {
    width: 100%;
    height: 100%;
}

.plane-name {
    fill: #f39a4a;
    font-size: 15px;
    font-weight: bold;
}

.dim-text {
    fill: #777;
    font-family: "Liberation Sans", sans-serif;
    font-size: 9px;
}

.sketch-lines {
    fill: none;
    stroke: #111;
    stroke-width: 1.6px;
}

.badge-text {
    fill: #111;
    font-family: "Liberation Serif", serif;
    font-size: 8px;
    font-weight: bold;
}

.tree-root {
    position: absolute;
    top: 3px;
    left: 4px;
    display: flex;
    align-items: center;
    gap: 3px;
    font-size: 9px;
}

.tree-root svg {
    width: 14px;
    height: 14px;
}

.expand {
    margin-right: 6px;
    border: 3px solid transparent;
    border-left-color: #111;
    border-right: 0;
}

.triad {
    position: absolute;
    left: 19px;
    bottom: 28px;
    width: 40px;
    height: 40px;
    font-size: 7px;
}

.view-name {
    position: absolute;
    left: 4px;
    bottom: 0;
    font-size: 9px;
    font-weight: bold;
}

.task-pane {
    position: absolute;
    top: 20px;
    right: 0;
    display: flex;
    flex-direction: column;
    width: 19px;
    height: 122px;
    border: 1px solid #aaa;
    border-right: 0;
}

.task-pane button {
    display: flex;
    align-items: center;
    justify-content: center;
    flex: 1;
    border-bottom: 1px solid #aaa;
    background-color: #d2d2d2;
}

.task-pane button:last-child {
    border-bottom: 0;
}

.task-pane .current {
    background-color: #fafafa;
}

.task-pane svg {
    width: 14px;
    height: 14px;
}
```
